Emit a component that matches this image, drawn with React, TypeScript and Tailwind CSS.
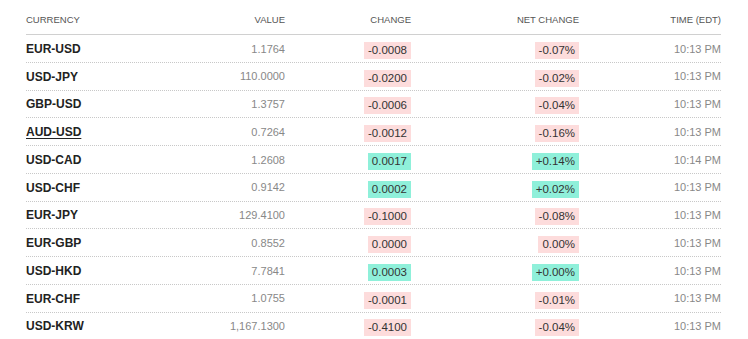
type Rate = {
  pair: string;
  value: string;
  change: string;
  net: string;
  time: string;
  up: boolean;
  link?: boolean;
};

const rates: Rate[] = [
  { pair: "EUR-USD", value: "1.1764", change: "-0.0008", net: "-0.07%", time: "10:13 PM", up: false },
  { pair: "USD-JPY", value: "110.0000", change: "-0.0200", net: "-0.02%", time: "10:13 PM", up: false },
  { pair: "GBP-USD", value: "1.3757", change: "-0.0006", net: "-0.04%", time: "10:13 PM", up: false },
  { pair: "AUD-USD", value: "0.7264", change: "-0.0012", net: "-0.16%", time: "10:13 PM", up: false, link: true },
  { pair: "USD-CAD", value: "1.2608", change: "0.0017", net: "+0.14%", time: "10:14 PM", up: true },
  { pair: "USD-CHF", value: "0.9142", change: "0.0002", net: "+0.02%", time: "10:13 PM", up: true },
  { pair: "EUR-JPY", value: "129.4100", change: "-0.1000", net: "-0.08%", time: "10:13 PM", up: false },
  { pair: "EUR-GBP", value: "0.8552", change: "0.0000", net: "0.00%", time: "10:13 PM", up: false },
  { pair: "USD-HKD", value: "7.7841", change: "0.0003", net: "+0.00%", time: "10:13 PM", up: true },
  { pair: "EUR-CHF", value: "1.0755", change: "-0.0001", net: "-0.01%", time: "10:13 PM", up: false },
  { pair: "USD-KRW", value: "1,167.1300", change: "-0.4100", net: "-0.04%", time: "10:13 PM", up: false },
];

const cols = "grid grid-cols-[120px_139px_126px_168px_142px]";

function Badge({ text, up }: { text: string; up: boolean }) {
  return (
    <span
      className={`inline-block px-[4px] leading-[17px] text-[11.5px] text-[#333] ${
        up ? "bg-[#8ff0da]" : "bg-[#fddcdc]"
      }`}
    >
      {text}
    </span>
  );
}

export default function App() {
  return (
    <div className="w-[748px] h-[339px] overflow-hidden bg-white font-['Liberation_Sans',Arial,sans-serif]">
      <div className="ml-[26px] w-[695px]">
        {/* header */}
        <div className={`${cols} items-end h-[35px] border-b border-[#d0d0d0] text-[9.5px] leading-[12px] text-[#555] pb-[8px]`}>
          <div>CURRENCY</div>
          <div className="text-right">VALUE</div>
          <div className="text-right">CHANGE</div>
          <div className="text-right">NET CHANGE</div>
          <div className="text-right">TIME (EDT)</div>
        </div>

        {/* rows */}
        {rates.map((r) => (
          <div
            key={r.pair}
            className={`${cols} items-center h-[27.75px] pt-[1px] border-b border-dotted border-[#c8c8c8]`}
          >
            <div
              className={`text-[12px] font-bold text-[#222] ${
                r.link ? "underline underline-offset-2" : ""
              }`}
            >
              {r.pair}
            </div>
            <div className="text-right text-[11px] text-[#888]">{r.value}</div>
            <div className="text-right">
              <Badge text={r.change} up={r.up} />
            </div>
            <div className="text-right">
              <Badge text={r.net} up={r.up} />
            </div>
            <div className="text-right text-[11px] text-[#888]">{r.time}</div>
          </div>
        ))}
      </div>
    </div>
  );
}
